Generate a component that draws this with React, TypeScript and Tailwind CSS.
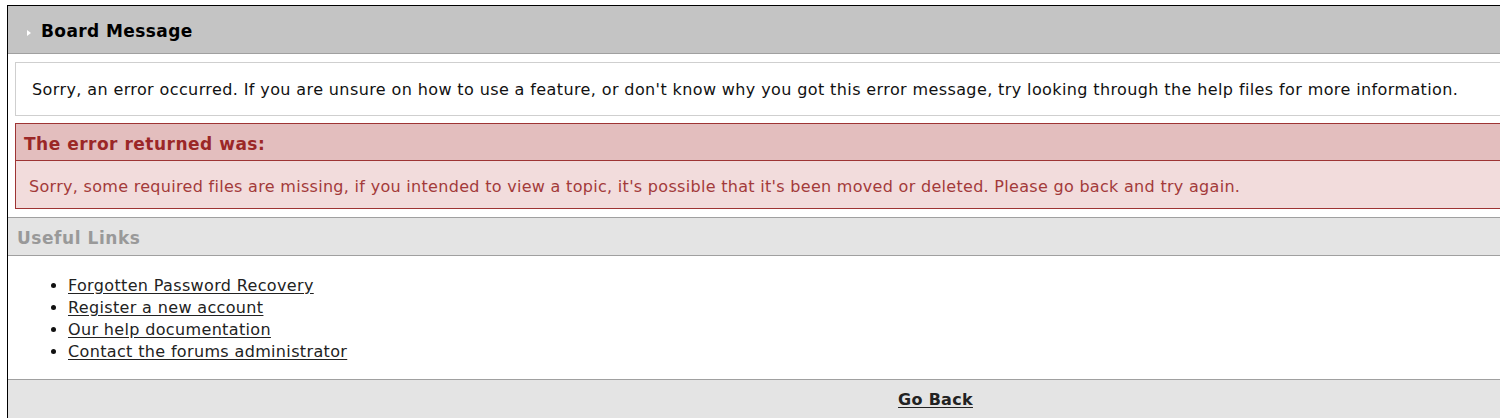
export default function App() {
  const links = [
    'Forgotten Password Recovery',
    'Register a new account',
    'Our help documentation',
    'Contact the forums administrator',
  ];

  return (
    <div className="w-[1500px] h-[418px] overflow-hidden bg-white pt-[5px] pl-[7px] font-['DejaVu_Sans',sans-serif]">
      <div className="w-[1856px] border-l border-t border-black">
        {/* Board header */}
        <div className="h-[48px] bg-[#c4c4c4] border-b border-[#a0a0a0] flex items-center pl-[19px] pt-[5px]">
          <span className="w-0 h-0 border-y-[3px] border-y-transparent border-l-[4px] border-l-white mr-[10px] mt-[1px]" />
          <span className="text-[17px] font-bold text-black tracking-[0.4px]">Board Message</span>
        </div>

        <div className="px-[7px] pt-[8px]">
          <div className="h-[54px] border border-[#cfcfcf] bg-white flex items-center pl-[16px] pt-[2px] text-[16px] tracking-[0.39px] text-[#111]">
            Sorry, an error occurred. If you are unsure on how to use a feature, or don't know why you got this error message, try looking through the help files for more information.
          </div>

          {/* Error box */}
          <div className="mt-[7px] border border-[#9e3434]">
            <div className="h-[37px] bg-[#e3bebe] border-b border-[#9e3434] flex items-center pl-[8px] pt-[5px]">
              <span className="text-[17px] font-bold text-[#9b2727] tracking-[0.5px]">The error returned was:</span>
            </div>
            <div className="h-[47px] bg-[#f2dcdc] flex items-center pl-[13px] pt-[4px] text-[16px] tracking-[0.3px] text-[#a33a3a]">
              Sorry, some required files are missing, if you intended to view a topic, it's possible that it's been moved or deleted. Please go back and try again.
            </div>
          </div>
        </div>

        {/* Useful links */}
        <div className="mt-[8px] h-[39px] bg-[#e4e4e4] border-y border-[#a0a0a0] flex items-center pl-[9px] pt-[5px]">
          <span className="text-[17px] font-bold text-[#999] tracking-[0.55px]">Useful Links</span>
        </div>
        <div className="h-[123px] pt-[19px]">
          <ul className="list-disc pl-[60px] text-[16px] leading-[22px] tracking-[0.35px] text-[#222] marker:text-[#111]">
            {links.map((l) => (
              <li key={l}>
                <a href="#" className="underline underline-offset-[2px]">{l}</a>
              </li>
            ))}
          </ul>
        </div>

        {/* Footer */}
        <div className="h-[40px] bg-[#e4e4e4] border-t border-[#a0a0a0] flex items-center justify-center pt-[1px]">
          <a href="#" className="text-[16px] font-bold text-[#222] underline underline-offset-[2px] tracking-[0.3px]">Go Back</a>
        </div>
      </div>
    </div>
  );
}
